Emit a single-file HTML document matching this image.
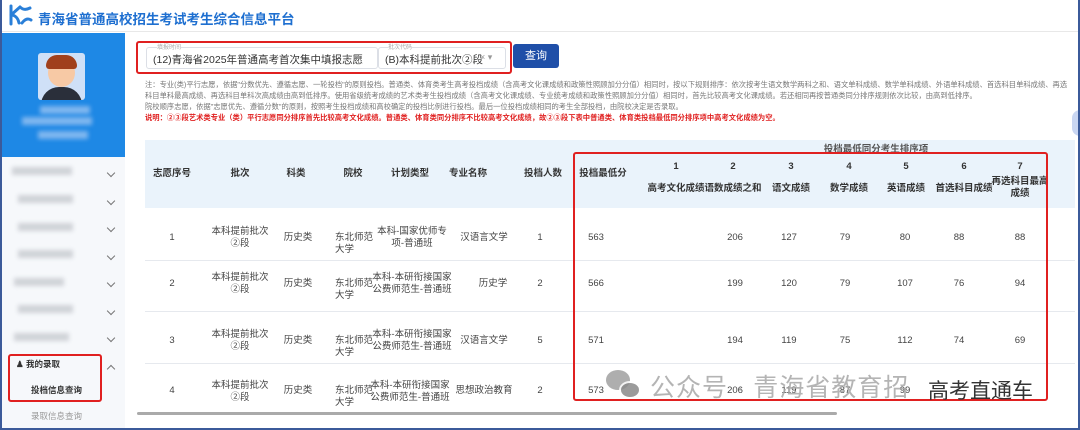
<!DOCTYPE html>
<html><head><meta charset="utf-8">
<style>
*{margin:0;padding:0;box-sizing:border-box}
body{width:1080px;height:430px;overflow:hidden;background:#fff;font-family:"Liberation Sans","Noto Sans CJK SC",sans-serif;position:relative}
.a{position:absolute}
.frame{left:0;top:0;width:1080px;height:430px;border:2px solid #3b5a9a;border-top:none}
.t{position:absolute;font-size:9.5px;color:#444;text-align:center;line-height:12px;transform:translateX(-50%);white-space:nowrap}
.h{font-weight:bold;color:#333;font-size:9.5px}
.red{border:2px solid #e02020;border-radius:3px;position:absolute}
.blur{position:absolute;background:#d0d3d8;filter:blur(2px);height:8px}
.chev{position:absolute;width:6px;height:6px;border-right:1px solid #777;border-bottom:1px solid #777;transform:rotate(45deg)}
.sep{position:absolute;left:145px;width:930px;height:1px;background:#e6e9ee}
.sel{position:absolute;height:22px;border:1px solid #dcdfe6;border-radius:3px;font-size:10.5px;color:#333;padding:4px 6px;white-space:nowrap;overflow:hidden;background:#fff}
</style></head><body>
<div class="a" style="left:0;top:0;width:1080px;height:32px;background:#fff;border-bottom:1px solid #e8e8e8"></div>
<svg class="a" style="left:8px;top:3px" width="26" height="24" viewBox="0 0 26 24"><path d="M3 3v18M3 12l9-8M3 12c4 0 7 3 8 8M12 4c3 3 6 3 10 1M14 20c3-4 6-5 9-3" stroke="#2a7fd8" stroke-width="3" fill="none" stroke-linecap="round"/></svg>
<div class="a" style="left:38px;top:8px;font-size:13.5px;font-weight:bold;color:#1e6fd0">青海省普通高校招生考试考生综合信息平台</div>
<div class="a" style="left:2px;top:33px;width:123px;height:397px;background:#f6f8fb"></div>
<div class="a" style="left:2px;top:33px;width:123px;height:124px;background:#1e88e5"></div>
<div class="a" style="left:38px;top:53px;width:47px;height:47px;background:#cfe0f7;border-radius:3px;overflow:hidden">
<div class="a" style="left:10px;top:6px;width:27px;height:28px;border-radius:50%;background:#f7c9a5"></div>
<div class="a" style="left:8px;top:2px;width:31px;height:14px;border-radius:14px 14px 4px 4px;background:#a0401c"></div>
<div class="a" style="left:3px;top:34px;width:41px;height:20px;border-radius:18px 18px 0 0;background:#2a2f3a"></div>
</div>
<div class="blur" style="left:40px;top:106px;width:50px;background:#7fb6ef"></div>
<div class="blur" style="left:22px;top:117px;width:70px;background:#7fb6ef"></div>
<div class="blur" style="left:38px;top:131px;width:50px;background:#7fb6ef"></div>
<div class="blur" style="left:12px;top:167px;width:60px"></div><div class="chev" style="left:108px;top:170px"></div>
<div class="blur" style="left:18px;top:195px;width:55px"></div><div class="chev" style="left:108px;top:198px"></div>
<div class="blur" style="left:18px;top:223px;width:55px"></div><div class="chev" style="left:108px;top:225px"></div>
<div class="blur" style="left:18px;top:250px;width:55px"></div><div class="chev" style="left:108px;top:253px"></div>
<div class="blur" style="left:14px;top:278px;width:50px"></div><div class="chev" style="left:108px;top:280px"></div>
<div class="blur" style="left:18px;top:305px;width:55px"></div><div class="chev" style="left:108px;top:308px"></div>
<div class="blur" style="left:14px;top:333px;width:55px"></div><div class="chev" style="left:108px;top:335px"></div>
<div class="a" style="left:16px;top:358px;font-size:8.5px;font-weight:bold;color:#333">♟ 我的录取</div>
<div class="chev" style="left:108px;top:366px;transform:rotate(-135deg)"></div>
<div class="a" style="left:31px;top:384px;font-size:8.5px;font-weight:bold;color:#333">投档信息查询</div>
<div class="a" style="left:31px;top:410px;font-size:8.5px;color:#999">录取信息查询</div>
<div class="red" style="left:8px;top:354px;width:94px;height:48px"></div>
<div class="sel" style="left:146px;top:47px;width:232px;padding-right:30px">(12)青海省2025年普通高考首次集中填报志愿</div>
<div class="a" style="left:345px;top:52px;font-size:9px;color:#999">× ▾</div>
<div class="a" style="left:157px;top:42px;font-size:6px;color:#aaa;background:#fff">填报时间</div>
<div class="sel" style="left:378px;top:47px;width:128px">(B)本科提前批次②段</div>
<div class="a" style="left:480px;top:52px;font-size:9px;color:#999">× ▾</div>
<div class="a" style="left:388px;top:42px;font-size:6px;color:#aaa;background:#fff">批次代码</div>
<div class="a" style="left:513px;top:44px;width:46px;height:24px;background:#1f4fa8;border-radius:3px;color:#fff;font-size:11px;text-align:center;line-height:24px">查询</div>
<div class="red" style="left:136px;top:41px;width:376px;height:33px"></div>
<div class="a" style="left:145px;top:79px;width:925px;font-size:7.3px;line-height:11px;color:#777">注：专业(类)平行志愿，依据"分数优先、遵循志愿、一轮投档"的原则投档。普通类、体育类考生高考投档成绩（含高考文化课成绩和政策性照顾加分分值）相同时，按以下规则排序：依次按考生语文数学两科之和、语文单科成绩、数学单科成绩、外语单科成绩、首选科目单科成绩、再选科目单科最高成绩、再选科目单科次高成绩由高到低排序。使用省级统考成绩的艺术类考生投档成绩（含高考文化课成绩、专业统考成绩和政策性照顾加分分值）相同时，首先比较高考文化课成绩。若还相同再按普通类同分排序规则依次比较，由高到低排序。<br>院校顺序志愿，依据"志愿优先、遵循分数"的原则，按照考生投档成绩和高校确定的投档比例进行投档。最后一位投档成绩相同的考生全部投档，由院校决定是否录取。<br><span style="color:#e02020;font-weight:bold">说明：②③段艺术类专业（类）平行志愿同分排序首先比较高考文化成绩。普通类、体育类同分排序不比较高考文化成绩，故②③段下表中普通类、体育类投档最低同分排序项中高考文化成绩为空。</span></div>
<div class="a" style="left:145px;top:140px;width:930px;height:68px;background:#eaf3fb"></div>
<div class="t h" style="left:172px;top:168px">志愿序号</div>
<div class="t h" style="left:240px;top:168px">批次</div>
<div class="t h" style="left:296px;top:168px">科类</div>
<div class="t h" style="left:353px;top:168px">院校</div>
<div class="t h" style="left:410px;top:168px">计划类型</div>
<div class="t h" style="left:468px;top:168px">专业名称</div>
<div class="t h" style="left:543px;top:168px">投档人数</div>
<div class="t h" style="left:603px;top:168px">投档最低分</div>
<div class="t h" style="left:876px;top:144px;color:#555">投档最低同分考生排序项</div>
<div class="t h" style="left:676px;top:161px">1</div><div class="t h" style="left:676px;top:183px">高考文化成绩</div>
<div class="t h" style="left:733px;top:161px">2</div><div class="t h" style="left:733px;top:183px">语数成绩之和</div>
<div class="t h" style="left:791px;top:161px">3</div><div class="t h" style="left:791px;top:183px">语文成绩</div>
<div class="t h" style="left:849px;top:161px">4</div><div class="t h" style="left:849px;top:183px">数学成绩</div>
<div class="t h" style="left:906px;top:161px">5</div><div class="t h" style="left:906px;top:183px">英语成绩</div>
<div class="t h" style="left:964px;top:161px">6</div><div class="t h" style="left:964px;top:183px">首选科目成绩</div>
<div class="t h" style="left:1020px;top:161px">7</div><div class="t h" style="left:1020px;top:176px">再选科目最高<br>成绩</div>
<div class="sep" style="top:260px"></div><div class="sep" style="top:311px"></div><div class="sep" style="top:363px"></div>
<div class="a" style="left:137px;top:412px;width:700px;height:3px;background:#aaa;border-radius:2px"></div>

<div class="t" style="left:172px;top:232px">1</div><div class="t" style="left:240px;top:226px">本科提前批次<br>②段</div><div class="t" style="left:298px;top:232px">历史类</div><div class="t" style="transform:none;left:335px;top:232px;text-align:left">东北师范<br>大学</div><div class="t" style="left:412px;top:226px">本科-国家优师专<br>项-普通班</div><div class="t" style="left:484px;top:232px">汉语言文学</div><div class="t" style="left:540px;top:232px">1</div>
<div class="t" style="left:596px;top:232px">563</div><div class="t" style="left:735px;top:232px">206</div><div class="t" style="left:789px;top:232px">127</div><div class="t" style="left:845px;top:232px">79</div><div class="t" style="left:905px;top:232px">80</div><div class="t" style="left:959px;top:232px">88</div><div class="t" style="left:1020px;top:232px">88</div>

<div class="t" style="left:172px;top:278px">2</div><div class="t" style="left:240px;top:272px">本科提前批次<br>②段</div><div class="t" style="left:298px;top:278px">历史类</div><div class="t" style="transform:none;left:335px;top:278px;text-align:left">东北师范<br>大学</div><div class="t" style="left:412px;top:272px">本科-本研衔接国家<br>公费师范生-普通班</div><div class="t" style="left:493px;top:278px">历史学</div><div class="t" style="left:540px;top:278px">2</div>
<div class="t" style="left:596px;top:278px">566</div><div class="t" style="left:735px;top:278px">199</div><div class="t" style="left:789px;top:278px">120</div><div class="t" style="left:845px;top:278px">79</div><div class="t" style="left:905px;top:278px">107</div><div class="t" style="left:959px;top:278px">76</div><div class="t" style="left:1020px;top:278px">94</div>

<div class="t" style="left:172px;top:335px">3</div><div class="t" style="left:240px;top:329px">本科提前批次<br>②段</div><div class="t" style="left:298px;top:335px">历史类</div><div class="t" style="transform:none;left:335px;top:335px;text-align:left">东北师范<br>大学</div><div class="t" style="left:412px;top:329px">本科-本研衔接国家<br>公费师范生-普通班</div><div class="t" style="left:484px;top:335px">汉语言文学</div><div class="t" style="left:540px;top:335px">5</div>
<div class="t" style="left:596px;top:335px">571</div><div class="t" style="left:735px;top:335px">194</div><div class="t" style="left:789px;top:335px">119</div><div class="t" style="left:845px;top:335px">75</div><div class="t" style="left:905px;top:335px">112</div><div class="t" style="left:959px;top:335px">74</div><div class="t" style="left:1020px;top:335px">69</div>

<div class="t" style="left:172px;top:385px">4</div><div class="t" style="left:240px;top:380px">本科提前批次<br>②段</div><div class="t" style="left:298px;top:385px">历史类</div><div class="t" style="transform:none;left:335px;top:385px;text-align:left">东北师范<br>大学</div><div class="t" style="left:410px;top:380px">本科-本研衔接国家<br>公费师范生-普通班</div><div class="t" style="left:484px;top:385px">思想政治教育</div><div class="t" style="left:540px;top:385px">2</div>
<div class="t" style="left:596px;top:385px">573</div><div class="t" style="left:735px;top:385px">206</div><div class="t" style="left:789px;top:385px">119</div><div class="t" style="left:845px;top:385px">87</div><div class="t" style="left:905px;top:385px">99</div>

<div class="red" style="left:573px;top:152px;width:475px;height:249px"></div>
<div class="a" style="left:606px;top:370px;width:24px;height:20px;border-radius:50%;background:#9a9a9a;opacity:.8"></div>
<div class="a" style="left:619px;top:381px;width:22px;height:18px;border-radius:50%;background:#8a8a8a;opacity:.85;border:2px solid #fff"></div>
<div class="a" style="left:650px;top:368px;font-size:25px;color:#a8a8a8;opacity:.85;letter-spacing:1px">公众号 · 青海省教育招</div>
<div class="a" style="left:928px;top:375px;font-size:21px;color:#333">高考直通车</div>
<div class="a" style="left:1072px;top:110px;width:8px;height:26px;background:#c9d6f2;border-radius:8px 0 0 8px"></div>
<div class="a frame"></div>
</body></html>
